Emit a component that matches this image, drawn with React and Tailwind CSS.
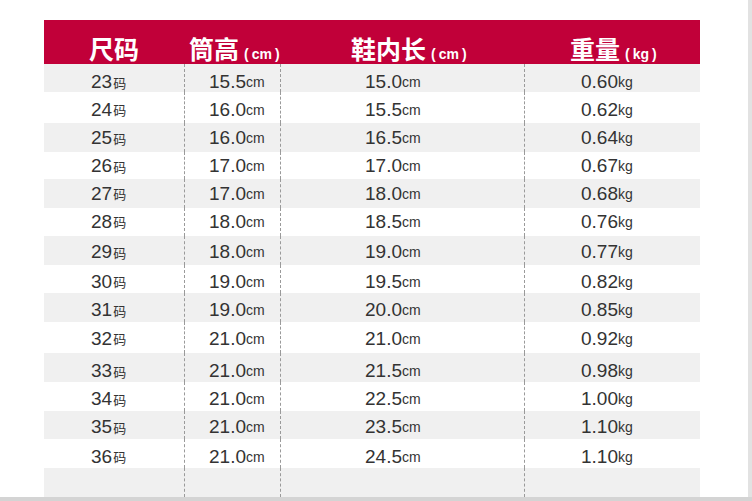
const rows = [
  { size: '23', tube: '15.5', inner: '15.0', weight: '0.60', h: 'h-[28px] pt-[9px]', bg: 'bg-[#f0f0f0]' },
  { size: '24', tube: '16.0', inner: '15.5', weight: '0.62', h: 'h-[31px] pt-[5px]', bg: 'bg-white' },
  { size: '25', tube: '16.0', inner: '16.5', weight: '0.64', h: 'h-[29px] pt-[2px]', bg: 'bg-[#f0f0f0]' },
  { size: '26', tube: '17.0', inner: '17.0', weight: '0.67', h: 'h-[27px] pt-[2px]', bg: 'bg-white' },
  { size: '27', tube: '17.0', inner: '18.0', weight: '0.68', h: 'h-[29px] pt-[1px]', bg: 'bg-[#f0f0f0]' },
  { size: '28', tube: '18.0', inner: '18.5', weight: '0.76', h: 'h-[28px] pt-0', bg: 'bg-white' },
  { size: '29', tube: '18.0', inner: '19.0', weight: '0.77', h: 'h-[29px] pt-[4px]', bg: 'bg-[#f0f0f0]' },
  { size: '30', tube: '19.0', inner: '19.5', weight: '0.82', h: 'h-[28px] pt-[6px]', bg: 'bg-white' },
  { size: '31', tube: '19.0', inner: '20.0', weight: '0.85', h: 'h-[29px] pt-[6px]', bg: 'bg-[#f0f0f0]' },
  { size: '32', tube: '21.0', inner: '21.0', weight: '0.92', h: 'h-[31px] pt-[3px]', bg: 'bg-white' },
  { size: '33', tube: '21.0', inner: '21.5', weight: '0.98', h: 'h-[29px] pt-[8px]', bg: 'bg-[#f0f0f0]' },
  { size: '34', tube: '21.0', inner: '22.5', weight: '1.00', h: 'h-[29px] pt-[6px]', bg: 'bg-white' },
  { size: '35', tube: '21.0', inner: '23.5', weight: '1.10', h: 'h-[28px] pt-[5px]', bg: 'bg-[#f0f0f0]' },
  { size: '36', tube: '21.0', inner: '24.5', weight: '1.10', h: 'h-[29px] pt-[7px]', bg: 'bg-white' },
];

const num = { fontFamily: '"Liberation Sans", Arial, sans-serif' };
const cjk = { fontFamily: '"Noto Sans CJK SC", "Noto Sans", sans-serif' };

function Unit({ children }) {
  return <span className="text-[14px]">{children}</span>;
}

function HeadTitle({ text, unit }) {
  return (
    <span className="whitespace-nowrap">
      <span className="text-[25px] leading-[25px] font-bold">{text}</span>
      {unit && (
        <span className="text-[14px] font-bold ml-[5px]" style={num}>
          (<span className="mx-[3px]">{unit}</span>)
        </span>
      )}
    </span>
  );
}

export default function App() {
  return (
    <div className="w-[752px] h-[501px] flex flex-col bg-white overflow-hidden" style={cjk}>
      <div className="flex h-[497px]">
        <div className="flex-1 pt-[20px] pl-[44px]">
          <div className="w-[656px]">
            {/* header */}
            <div className="grid grid-cols-[140px_96px_244px_176px] h-[44px] bg-[#c10039] text-white pt-[16px]">
              <div className="pl-[45px]"><HeadTitle text="尺码" /></div>
              <div className="pl-[5px]"><HeadTitle text="筒高" unit="cm" /></div>
              <div className="pl-[71px]"><HeadTitle text="鞋内长" unit="cm" /></div>
              <div className="pl-[46px]"><HeadTitle text="重量" unit="kg" /></div>
            </div>

            {rows.map((r) => (
              <div key={r.size} className={`grid grid-cols-[140px_96px_244px_176px] text-[19px] text-[#333] ${r.bg}`}>
                <div className={`flex items-center pl-[47px] ${r.h}`} style={num}>
                  {r.size}<span className="text-[13px] ml-[1px]" style={cjk}>码</span>
                </div>
                <div className={`flex items-center pl-[24px] border-l border-dashed border-[#9a9a9a] ${r.h}`} style={num}>
                  {r.tube}<Unit>cm</Unit>
                </div>
                <div className={`flex items-center pl-[84px] border-l border-dashed border-[#9a9a9a] ${r.h}`} style={num}>
                  {r.inner}<Unit>cm</Unit>
                </div>
                <div className={`flex items-center pl-[56px] border-l border-dashed border-[#9a9a9a] ${r.h}`} style={num}>
                  {r.weight}<Unit>kg</Unit>
                </div>
              </div>
            ))}

            {/* empty last row */}
            <div className="grid grid-cols-[140px_96px_244px_176px] h-[29px] bg-[#f0f0f0]">
              <div />
              <div className="border-l border-dashed border-[#9a9a9a]" />
              <div className="border-l border-dashed border-[#9a9a9a]" />
              <div className="border-l border-dashed border-[#9a9a9a]" />
            </div>
          </div>
        </div>
        <div className="w-[4px] bg-[#e2e2e2]" />
      </div>
      <div className="h-[4px] bg-[#d4d4d4]" />
    </div>
  );
}
